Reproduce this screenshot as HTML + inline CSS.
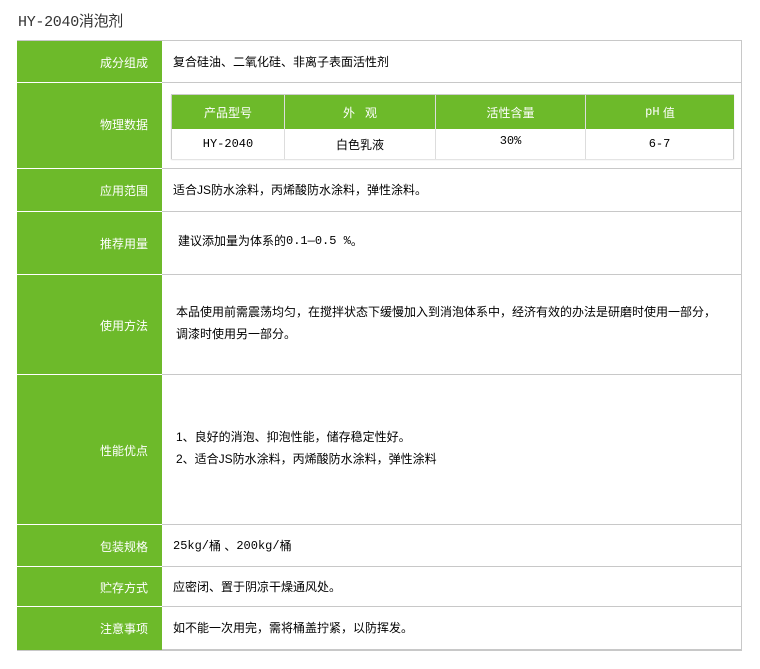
<!DOCTYPE html>
<html><head><meta charset="utf-8"><style>
body{margin:0;width:760px;height:669px;background:#fff;font-family:"Liberation Sans","Noto Sans CJK SC","WenQuanYi Zen Hei",sans-serif;font-size:12px;color:#000;position:relative;overflow:hidden}
.t{position:absolute;left:18px;top:10px;font-size:15px;color:#333;font-family:"Liberation Mono","Noto Sans CJK SC",monospace;letter-spacing:-0.3px}
.r{position:absolute;left:17px;width:725px;}
.l{position:absolute;left:0;top:0;bottom:0;width:145px;background:#6dba2a;color:#fff;text-align:right;box-sizing:border-box;padding-right:14px;display:flex;align-items:center;justify-content:flex-end}
.c{position:absolute;left:145px;right:0;top:0;bottom:0;display:flex;align-items:center;padding-left:11px;border-bottom:1px solid #c8c8c8;line-height:22px}
.r .lb{position:absolute;left:0;width:145px;bottom:0;height:1px;background:#fff}
.in{position:absolute;left:171px;top:94px;width:563px;height:65px;border:1px solid #ccc;box-sizing:border-box;box-shadow:0 1px 1px #ddd}
.in div{position:absolute;display:flex;align-items:center;justify-content:center}
.h{top:0;height:34px;background:#6dba2a;color:#fff;font-size:12px}
.d{top:34px;height:30px;background:#fff}
.m{font-family:"Liberation Mono","Noto Sans CJK SC",monospace}
</style></head><body>
<div class="t">HY-2040消泡剂</div>
<div class="r" style="top:41px;height:42px"><div class="l">成分组成</div><div class="c">复合硅油、二氧化硅、非离子表面活性剂</div><div class="lb"></div></div>
<div class="r" style="top:83px;height:86px"><div class="l" style="padding-bottom:4px">物理数据</div><div class="c"></div><div class="lb"></div></div>
<div class="r" style="top:169px;height:43px"><div class="l">应用范围</div><div class="c">适合JS防水涂料，丙烯酸防水涂料，弹性涂料。</div><div class="lb"></div></div>
<div class="r" style="top:212px;height:63px"><div class="l">推荐用量</div><div class="c" style="padding-left:16px;padding-bottom:4px">建议添加量为体系的<span class="m">0.1—0.5 %</span>。</div><div class="lb"></div></div>
<div class="r" style="top:275px;height:100px"><div class="l">使用方法</div><div class="c" style="padding-left:14px;padding-bottom:4px">本品使用前需震荡均匀，在搅拌状态下缓慢加入到消泡体系中，经济有效的办法是研磨时使用一部分，<br>调漆时使用另一部分。</div><div class="lb"></div></div>
<div class="r" style="top:375px;height:150px"><div class="l">性能优点</div><div class="c" style="padding-left:14px;padding-bottom:4px">1、良好的消泡、抑泡性能，储存稳定性好。<br>2、适合JS防水涂料，丙烯酸防水涂料，弹性涂料</div><div class="lb"></div></div>
<div class="r" style="top:525px;height:42px"><div class="l">包装规格</div><div class="c"><span class="m">25kg/</span>桶 、<span class="m">200kg/</span>桶</div><div class="lb"></div></div>
<div class="r" style="top:567px;height:40px"><div class="l">贮存方式</div><div class="c">应密闭、置于阴凉干燥通风处。</div><div class="lb"></div></div>
<div class="r" style="top:607px;height:43px"><div class="l">注意事项</div><div class="c">如不能一次用完，需将桶盖拧紧，以防挥发。</div></div>
<div style="position:absolute;left:17px;top:40px;width:725px;height:1px;background:#c8c8c8"></div>
<div style="position:absolute;left:741px;top:40px;width:1px;height:611px;background:#c8c8c8"></div>
<div style="position:absolute;left:17px;top:650px;width:725px;height:1px;background:#c8c8c8"></div>
<div class="in">
<div class="h" style="left:0;width:112px">产品型号</div>
<div class="h" style="left:113px;width:150px">外&nbsp;&nbsp;&nbsp;观</div>
<div class="h" style="left:264px;width:149px">活性含量</div>
<div class="h" style="left:414px;width:148px"><span class="m">pH</span>&nbsp;值</div>
<div style="left:112px;top:0;width:1px;height:64px;background:#ddd"></div>
<div style="left:263px;top:0;width:1px;height:64px;background:#ddd"></div>
<div style="left:413px;top:0;width:1px;height:64px;background:#ddd"></div>
<div class="d m" style="left:0;width:112px">HY-2040</div>
<div class="d" style="left:113px;width:150px">白色乳液</div>
<div class="d m" style="left:264px;width:149px;align-items:flex-start;padding-top:5px;box-sizing:border-box">30%</div>
<div class="d m" style="left:414px;width:147px">6-7</div>
</div>
</body></html>
